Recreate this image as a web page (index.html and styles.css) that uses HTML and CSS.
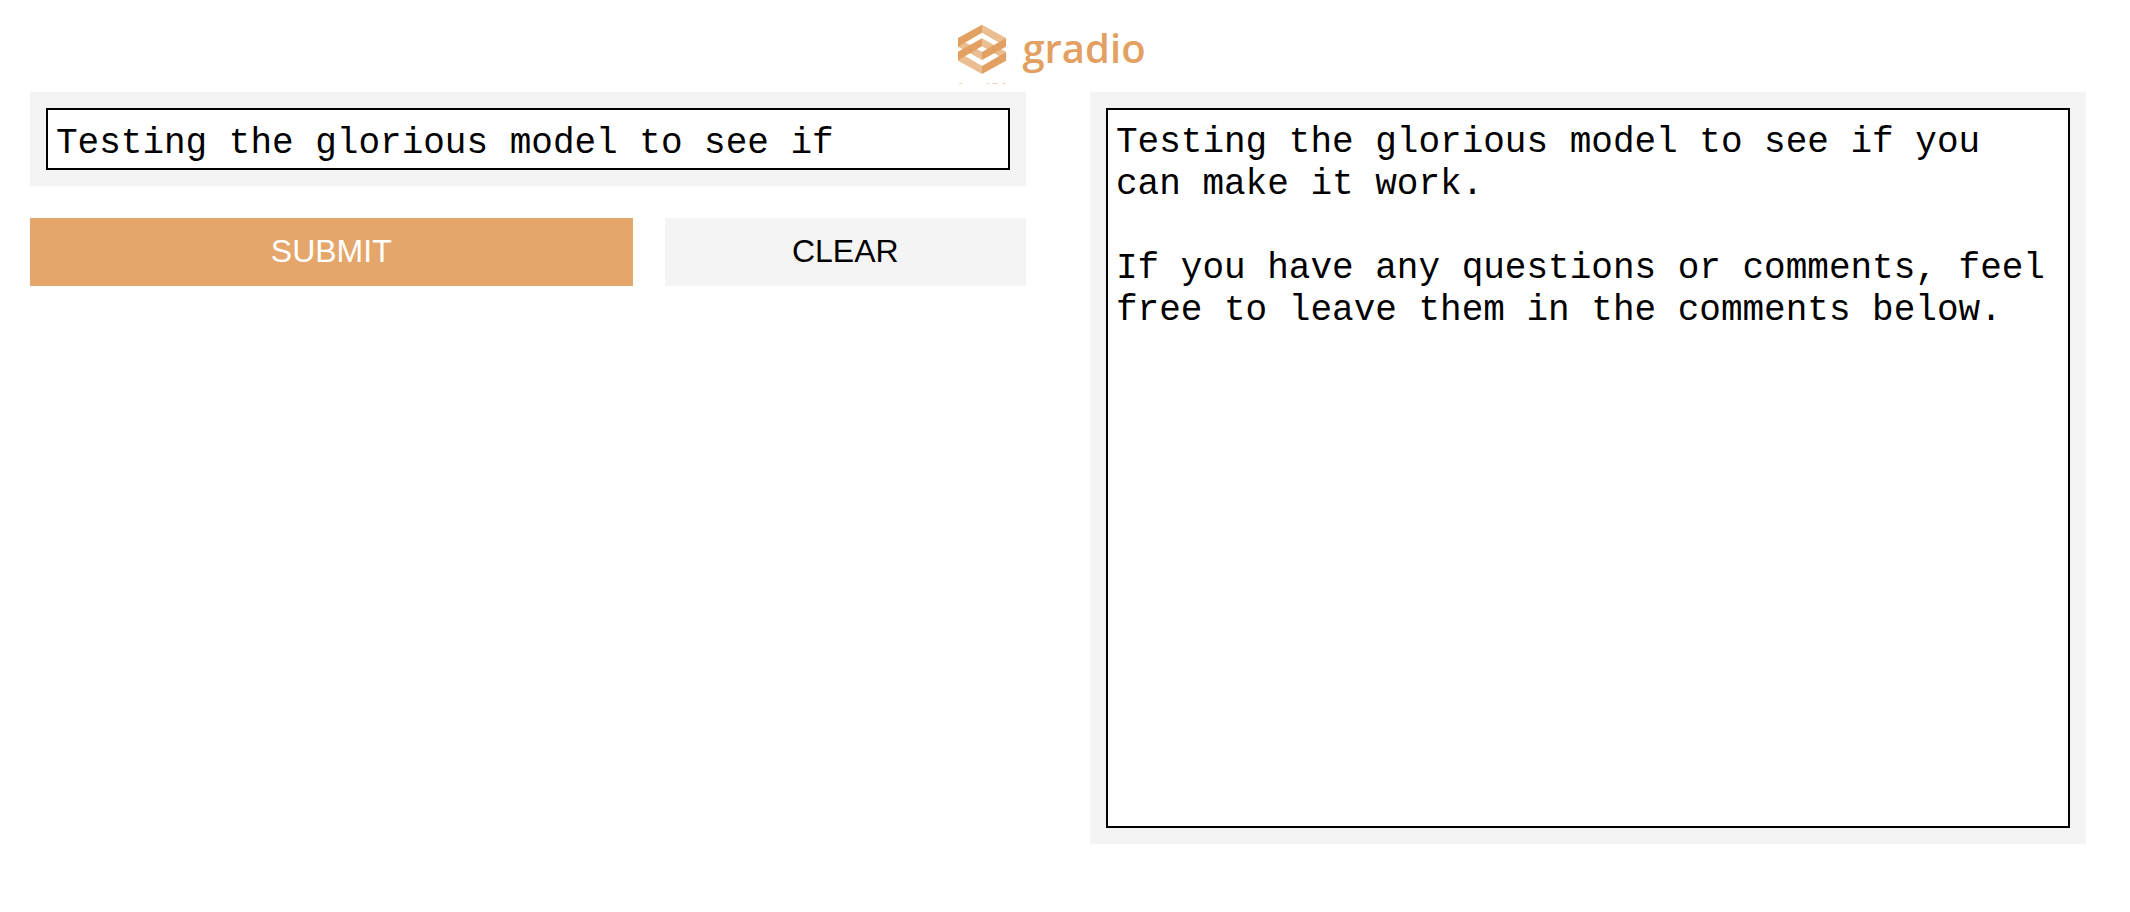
FILE: index.html
```html
<!DOCTYPE html>
<html lang="en">
<head>
  <meta charset="utf-8">
  <meta name="viewport" content="width=device-width, initial-scale=1">
  <title>gradio</title>
  <link rel="stylesheet" href="styles.css">
</head>
<body>
  <header class="header">
    <a class="logo" href="#">
      <svg class="logo-mark" viewBox="0 0 144 180" aria-hidden="true">
        <g fill="#ebbe91">
          <path d="M72 2 144 42V68L72 26Z"/>
          <path d="M0 42 72 84V108L0 68Z"/>
          <path d="M72 43 144 83V109L72 67Z"/>
          <path d="M0 84 72 126V150L0 110Z"/>
        </g>
        <g fill="#e2a162">
          <path d="M72 2 0 42V68L72 26Z"/>
          <path d="M72 43 0 83V109L72 67Z"/>
          <path d="M144 84 72 126V150L144 110Z"/>
          <path d="M144 42 72 84V108L144 68Z"/>
        </g>
        <g fill="#f0cfae">
          <path d="M4 177H12V180H4ZM88 177H94V180H88ZM104 177H118V180H104ZM133 177H142V180H133Z"/>
        </g>
      </svg>
      <span class="logo-text">gradio</span>
    </a>
  </header>
  <main class="interface">
    <form class="column">
      <div class="panel">
        <input class="field" type="text" aria-label="Input" value="Testing the glorious model to see if">
      </div>
      <div class="actions">
        <button class="button button-submit" type="button">SUBMIT</button>
        <button class="button" type="reset">CLEAR</button>
      </div>
    </form>
    <section class="column">
      <div class="panel">
        <textarea class="field field-output" aria-label="Output" readonly>Testing the glorious model to see if you can make it work.

If you have any questions or comments, feel free to leave them in the comments below.</textarea>
      </div>
    </section>
  </main>
</body>
</html>
```
FILE: styles.css
```css
* {
  box-sizing: border-box;
}

body {
  margin: 0;
  padding: 24px 44px 24px 30px;
  background: #fff;
  color: #000;
  font-family: "Liberation Sans", Arial, sans-serif;
}

.header {
  display: flex;
  justify-content: center;
  height: 68px;
  padding-right: 12px;
}

.logo {
  display: flex;
  gap: 16px;
  color: #e2a162;
  text-decoration: none;
}

.logo-mark {
  width: 48px;
  height: 60px;
}

.logo-text {
  font: 600 40px/48px "Open Sans", sans-serif;
}

.interface {
  display: grid;
  grid-template-columns: 1fr 1fr;
  gap: 64px;
  align-items: start;
}

.column {
  display: grid;
  gap: 32px;
  min-width: 0;
}

.panel {
  display: flex;
  padding: 16px;
  background: #f4f4f4;
}

.field {
  width: 100%;
  margin: 0;
  padding: 12px 8px 4px;
  border: 2px solid #000;
  border-radius: 0;
  outline: none;
  background: #fff;
  color: #000;
  font: 36px/42px "Liberation Mono", "Courier New", monospace;
}

input.field {
  height: 62px;
}

.field-output {
  height: 720px;
  resize: none;
}

.actions {
  display: grid;
  grid-template-columns: 5fr 3fr;
  gap: 32px;
}

.button {
  padding: 13px 16px 15px;
  border: 0;
  background: #f4f4f4;
  color: #000;
  font: 32px/40px "Liberation Sans", Arial, sans-serif;
  cursor: pointer;
}

.button-submit {
  background: #e4a66b;
  color: #fff;
}
```
